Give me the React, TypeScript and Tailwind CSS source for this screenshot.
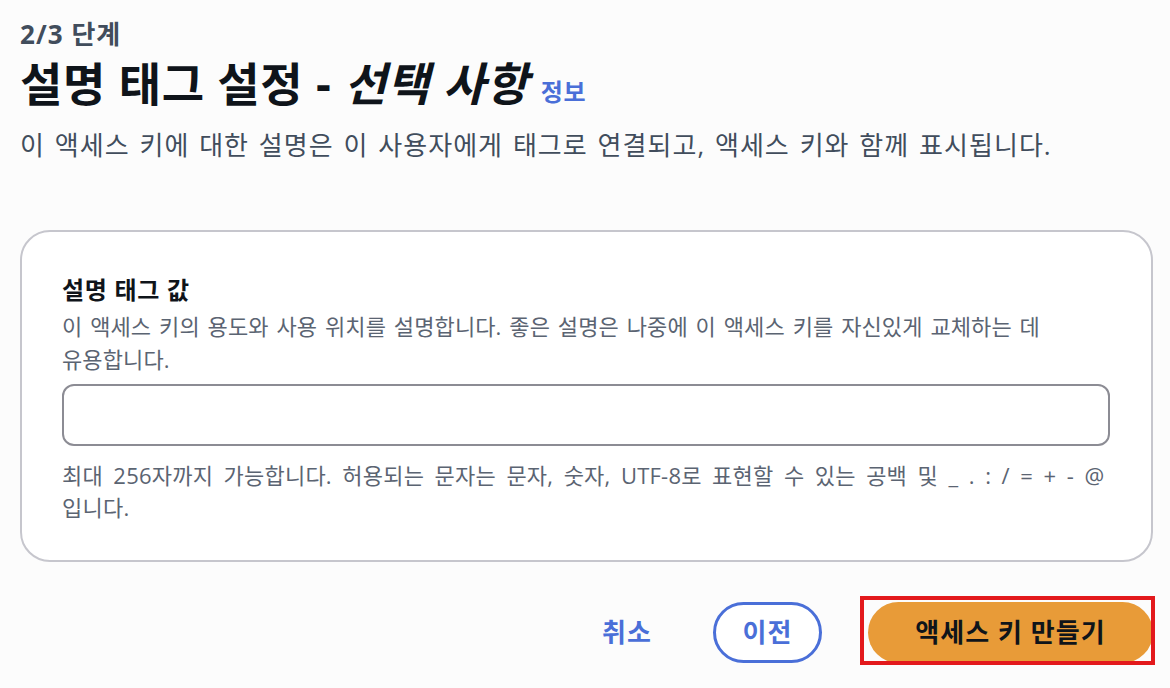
import React from "react";

const font = { fontFamily: '"Open Sans", "Noto Sans CJK KR", sans-serif' };

export default function App() {
  return (
    <div
      className="min-h-[688px] w-[1170px] bg-[#fcfcfc] pl-[20px] pr-[17px] pt-[17px] text-[#0f141a] break-keep"
      style={font}
    >
      <p className="text-[26px] leading-[34px] font-bold tracking-[0.04em] text-[#414d5c]">2/3 단계</p>
      <div className="mt-[5px] flex items-baseline gap-[12px]">
        <h1 className="text-[46px] leading-[54px] font-bold tracking-[0.015em] text-[#0f141a]">
          설명 태그 설정 - <i>선택 사항</i>
        </h1>
        <a className="text-[24px] font-bold tracking-[0.03em] text-[#4a6fd8]">정보</a>
      </div>
      <p className="mt-[17px] text-[26px] leading-[36px] tracking-[0.04em] [word-spacing:2px] text-[#414d5c]">
        이 액세스 키에 대한 설명은 이 사용자에게 태그로 연결되고, 액세스 키와 함께 표시됩니다.
      </p>

      <section className="mt-[67px] rounded-[30px] border-2 border-[#c6c6cd] bg-white pl-[40px] pr-[41px] pt-[42px] pb-[37px]">
        <h2 className="text-[24px] leading-[32px] font-bold tracking-[0.03em] text-[#0f141a]">설명 태그 값</h2>
        <p className="mt-[4px] text-[22px] leading-[33px] tracking-[0.005em] [word-spacing:2px] text-[#5b6472]">
          이 액세스 키의 용도와 사용 위치를 설명합니다. 좋은 설명은 나중에 이 액세스 키를 자신있게 교체하는 데 유용합니다.
        </p>
        <input
          className="mt-[8px] block h-[62px] w-full rounded-[12px] border-2 border-[#8c8c94] bg-white px-4 text-[22px] outline-none"
          aria-label="설명 태그 값"
        />
        <p className="mt-[13px] text-[22px] leading-[32px] tracking-[0.01em] [word-spacing:4.5px] text-[#5b6472]">
          최대 256자까지 가능합니다. 허용되는 문자는 문자, 숫자, UTF-8로 표현할 수 있는 공백 및 _ . : / = + - @ 입니다.
        </p>
      </section>

      <div className="mt-[40px] flex items-center justify-end">
        <button className="text-[26px] font-bold tracking-[0.04em] text-[#4a6fd8]">취소</button>
        <button className="ml-[61px] h-[61px] w-[109px] rounded-full border-[3px] border-[#4a6fd8] bg-white text-[26px] font-bold tracking-[0.04em] text-[#4a6fd8]">
          이전
        </button>
        <div className="relative ml-[46px]">
          <button className="h-[61px] w-[285px] rounded-full bg-[#e89b38] text-[26px] font-bold tracking-[0.04em] text-[#0f141a]">
            액세스 키 만들기
          </button>
          <div className="pointer-events-none absolute -top-[6px] -bottom-[2px] -left-[8px] -right-[2px] border-4 border-[#e3191c]" />
        </div>
      </div>
    </div>
  );
}
